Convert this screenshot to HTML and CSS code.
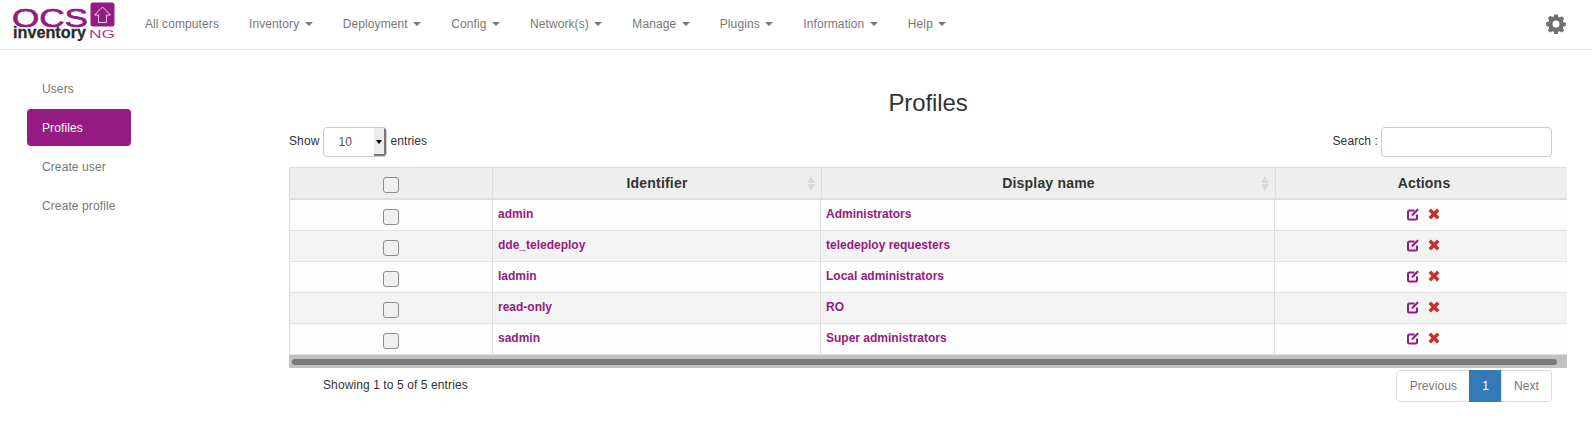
FILE: index.html
```html
<!DOCTYPE html>
<html>
<head>
<meta charset="utf-8"/>
<title>Profiles</title>
<link rel="stylesheet" href="styles.css">
</head>
<body>
<nav class="navbar">
  <a class="logo" href="#">
    <svg width="104" height="42" viewBox="0 0 104 42">
      <text class="logo-ocs" x="-1" y="26.500" textLength="76" lengthAdjust="spacingAndGlyphs">OCS</text>
      <rect x="77.500" y="2.500" width="24" height="24" rx="2.500" fill="#951b81"/>
      <path d="M89.500 7 L97.500 15 H93.500 V22.500 H85.500 V15 H81.500 Z" fill="none" stroke="#f0d0ea" stroke-width="1"/>
      <text class="logo-inv" x="0" y="38" textLength="73" lengthAdjust="spacingAndGlyphs">inventory</text>
      <text class="logo-ng" x="76" y="38" textLength="26" lengthAdjust="spacingAndGlyphs">NG</text>
    </svg>
  </a>
  <ul class="nav-menu">
    <li>All computers</li>
    <li>Inventory <b class="caret"></b></li>
    <li>Deployment <b class="caret"></b></li>
    <li>Config <b class="caret"></b></li>
    <li>Network(s) <b class="caret"></b></li>
    <li>Manage <b class="caret"></b></li>
    <li>Plugins <b class="caret"></b></li>
    <li>Information <b class="caret"></b></li>
    <li>Help <b class="caret"></b></li>
  </ul>
  <svg class="gear" width="20" height="20" viewBox="0 0 20 20">
    <path fill-rule="evenodd" fill="#6f6f6f" d="M8.300 0.500h3.400l.5 2.500 1.500.6 2.100-1.400 2.400 2.400-1.400 2.100.6 1.500 2.500.5v3.400l-2.500.5-.6 1.500 1.400 2.100-2.400 2.400-2.100-1.400-1.500.6-.5 2.500H8.300l-.5-2.500-1.500-.6-2.100 1.400-2.400-2.400 1.400-2.100-.6-1.500-2.500-.5V8.200l2.500-.5.6-1.500-1.400-2.100 2.400-2.400 2.100 1.400 1.500-.6z M10 6.500a3.500 3.500 0 1 0 0 7a3.500 3.500 0 1 0 0-7z"/>
  </svg>
</nav>

<div class="page">
  <ul class="side-menu">
    <li>Users</li>
    <li class="active">Profiles</li>
    <li>Create user</li>
    <li>Create profile</li>
  </ul>

  <main class="content">
    <h3 class="title">Profiles</h3>
    <div class="tools">
      <div class="length">Show
        <span class="fake-select"><span class="fake-value">10</span><span class="fake-arrow"></span></span>
        entries</div>
      <label class="search">Search : <input type="text"></label>
    </div>

    <div class="grid-wrap">
      <div class="row head">
        <div class="cell check"><input type="checkbox"></div>
        <div class="cell">Identifier<span class="sort"></span></div>
        <div class="cell">Display name<span class="sort"></span></div>
        <div class="cell last">Actions</div>
      </div>
      <div class="row">
        <div class="cell check"><input type="checkbox"></div>
        <div class="cell"><a href="#">admin</a></div>
        <div class="cell"><a href="#">Administrators</a></div>
        <div class="cell last">
          <svg class="ico" width="14" height="14" viewBox="0 0 14 14"><use href="#edit"/></svg>
          <svg class="ico" width="14" height="14" viewBox="0 0 14 14"><use href="#cross"/></svg>
        </div>
      </div>
      <div class="row even">
        <div class="cell check"><input type="checkbox"></div>
        <div class="cell"><a href="#">dde_teledeploy</a></div>
        <div class="cell"><a href="#">teledeploy requesters</a></div>
        <div class="cell last">
          <svg class="ico" width="14" height="14" viewBox="0 0 14 14"><use href="#edit"/></svg>
          <svg class="ico" width="14" height="14" viewBox="0 0 14 14"><use href="#cross"/></svg>
        </div>
      </div>
      <div class="row">
        <div class="cell check"><input type="checkbox"></div>
        <div class="cell"><a href="#">ladmin</a></div>
        <div class="cell"><a href="#">Local administrators</a></div>
        <div class="cell last">
          <svg class="ico" width="14" height="14" viewBox="0 0 14 14"><use href="#edit"/></svg>
          <svg class="ico" width="14" height="14" viewBox="0 0 14 14"><use href="#cross"/></svg>
        </div>
      </div>
      <div class="row even">
        <div class="cell check"><input type="checkbox"></div>
        <div class="cell"><a href="#">read-only</a></div>
        <div class="cell"><a href="#">RO</a></div>
        <div class="cell last">
          <svg class="ico" width="14" height="14" viewBox="0 0 14 14"><use href="#edit"/></svg>
          <svg class="ico" width="14" height="14" viewBox="0 0 14 14"><use href="#cross"/></svg>
        </div>
      </div>
      <div class="row">
        <div class="cell check"><input type="checkbox"></div>
        <div class="cell"><a href="#">sadmin</a></div>
        <div class="cell"><a href="#">Super administrators</a></div>
        <div class="cell last">
          <svg class="ico" width="14" height="14" viewBox="0 0 14 14"><use href="#edit"/></svg>
          <svg class="ico" width="14" height="14" viewBox="0 0 14 14"><use href="#cross"/></svg>
        </div>
      </div>
      <div class="scrollbar"><div class="thumb"></div></div>
    </div>

    <div class="foot">
      <div class="info">Showing 1 to 5 of 5 entries</div>
      <ul class="pager">
        <li>Previous</li>
        <li class="current">1</li>
        <li>Next</li>
      </ul>
    </div>
  </main>
</div>

<svg class="defs" width="0" height="0">
  <symbol id="edit" viewBox="0 0 14 14">
    <path d="M8.500 3.500H3.500C2.600 3.500 2 4.100 2 5v6c0 .9.600 1.500 1.500 1.500h6c.9 0 1.500-.6 1.500-1.500V7.500" fill="none" stroke="#951b81" stroke-width="2"/>
    <path d="M5.500 7.300L11.300 1.500l1.500 1.500-5.800 5.800H5.500z" fill="#951b81"/>
  </symbol>
  <symbol id="cross" viewBox="0 0 14 14">
    <path d="M4 1.500L7 4.500l3-3 2.500 2.500-3 3 3 3-2.500 2.500-3-3-3 3L1.500 10l3-3-3-3z" fill="#c9302c"/>
  </symbol>
</svg>
</body>
</html>
```
FILE: styles.css
```css
* {
  box-sizing: border-box;
}

html, body {
  height: 100%;
  overflow: hidden;
}

body {
  margin: 0;
  font-family: "Liberation Sans", Arial, sans-serif;
  font-size: 12px;
  line-height: 17px;
  letter-spacing: 0.100px;
  color: #333;
  background-color: white;
}

ul {
  list-style: none;
  margin: 0;
  padding: 0;
}

a {
  color: #951b81;
  text-decoration: none;
}

/* top bar */
.navbar {
  display: flex;
  align-items: center;
  height: 50px;
  padding-left: 13px;
  padding-right: 26px;
  border-bottom: 1px solid #e7e7e7;
}

.logo {
  display: block;
  width: 117px;
  height: 42px;
  margin-top: -7px;
}

.logo-ocs {
  font-size: 26px;
  letter-spacing: 0;
  fill: #951b81;
  stroke: #951b81;
  stroke-width: 0.700;
}

.logo-inv {
  font-size: 16px;
  font-weight: bold;
  letter-spacing: 0;
  fill: #2b2b2b;
  stroke: #2b2b2b;
  stroke-width: 0.300;
}

.logo-ng {
  font-size: 11px;
  letter-spacing: 0;
  fill: #a83f98;
}

.nav-menu {
  display: flex;
  flex: 1;
  margin-top: -1px;
}

.nav-menu li {
  padding: 0 15px;
  color: #777;
  white-space: nowrap;
}

.caret {
  display: inline-block;
  width: 0;
  height: 0;
  margin-left: 2px;
  vertical-align: middle;
  border-top: 4px solid #777;
  border-left: 4px solid transparent;
  border-right: 4px solid transparent;
}

.gear {
  margin-top: -2px;
}

/* page */
.page {
  display: flex;
  padding: 20px 25px 0 27px;
}

.side-menu {
  width: 104px;
  flex-shrink: 0;
}

.side-menu li {
  height: 37px;
  margin-bottom: 2px;
  padding: 11px 15px 9px;
  color: #777;
  border-radius: 4px;
}

.side-menu .active {
  color: white;
  background-color: #951b81;
}

.content {
  flex: 1;
  margin-left: 158px;
}

.title {
  margin: 20px 0 0;
  font-size: 24px;
  font-weight: 500;
  line-height: 26px;
  letter-spacing: -0.100px;
  text-align: center;
}

.tools {
  display: flex;
  justify-content: space-between;
  align-items: center;
  height: 31px;
  margin-top: 10px;
  padding-right: 15px;
}

.length {
  display: flex;
  align-items: center;
  gap: 3px;
}

.fake-select {
  display: flex;
  justify-content: space-between;
  width: 64px;
  height: 30px;
  margin-left: 1px;
  border: 1px solid #ccc;
  border-radius: 4px;
  background-color: white;
  overflow: hidden;
}

.fake-value {
  padding: 6px 0 0 14px;
  color: #555;
}

.fake-arrow {
  position: relative;
  width: 12px;
  background-color: #ececec;
  border-right: 2px solid #777;
  border-bottom: 2px solid #777;
}

.fake-arrow::after {
  content: "";
  position: absolute;
  left: 2px;
  top: 12px;
  border-top: 4px solid black;
  border-left: 3px solid transparent;
  border-right: 3px solid transparent;
}

.search {
  display: flex;
  align-items: center;
  gap: 3px;
}

.search input {
  width: 171px;
  height: 30px;
  border: 1px solid #ccc;
  border-radius: 4px;
}

/* table */
.grid-wrap {
  margin-top: 10px;
}

.row {
  display: grid;
  grid-template-columns: 203px 328px 454px 1fr;
  height: 31px;
  background-color: #fdfdfd;
  border-bottom: 1px solid #e2e2e2;
}

.row.even {
  background-color: #f3f3f3;
}

.row.head {
  grid-template-columns: 203px 329px 454px 1fr;
  height: 33px;
  font-size: 14px;
  text-align: center;
  background-color: #eee;
  border-top: 1px solid #ddd;
  border-bottom: 2px solid #ddd;
}

.cell {
  position: relative;
  padding: 6px 5px 0;
  font-weight: bold;
  letter-spacing: 0;
  border-left: 1px solid #ddd;
}

.row.head .cell {
  padding-top: 7px;
  letter-spacing: 0.200px;
}

.row.head .cell.check {
  padding: 0;
}

.cell.check {
  padding: 0;
  display: flex;
  align-items: center;
  justify-content: center;
}

.cell.last {
  padding: 5px 0 0 5px;
  text-align: center;
}

.cell input {
  appearance: none;
  width: 16px;
  height: 16px;
  margin: 4px 0 0;
  border: 1px solid #8c8c8c;
  border-radius: 3px;
  background-color: #f0f0f0;
}

.ico {
  margin: 2px 2px 0;
  vertical-align: top;
}

.sort {
  position: absolute;
  right: 6px;
  top: 8px;
  width: 8px;
  height: 15px;
}

.sort::before,
.sort::after {
  content: "";
  position: absolute;
  left: 0;
  border-left: 4px solid transparent;
  border-right: 4px solid transparent;
}

.sort::before {
  top: 0;
  border-bottom: 7px solid #d8d8d8;
}

.sort::after {
  bottom: 0;
  border-top: 7px solid #d8d8d8;
}

.scrollbar {
  height: 13px;
  padding: 4px 3px 3px;
  background-color: #c1c1c1;
}

.thumb {
  width: 1265px;
  height: 6px;
  border-radius: 3px;
  background-color: #7a7a7a;
}

/* footer */
.foot {
  display: flex;
  justify-content: space-between;
  padding: 2px 15px 0 34px;
}

.info {
  padding-top: 7px;
}

.pager {
  display: flex;
  height: 32px;
  color: #777;
}

.pager li {
  padding: 7px 12px;
  border: 1px solid #ddd;
  margin-left: -1px;
}

.pager li:first-child {
  padding-left: 13px;
  border-radius: 4px 0 0 4px;
}

.pager li:last-child {
  border-radius: 0 4px 4px 0;
}

.pager .current {
  color: white;
  background-color: #337ab7;
  border-color: #337ab7;
}

.defs {
  position: absolute;
}
```
